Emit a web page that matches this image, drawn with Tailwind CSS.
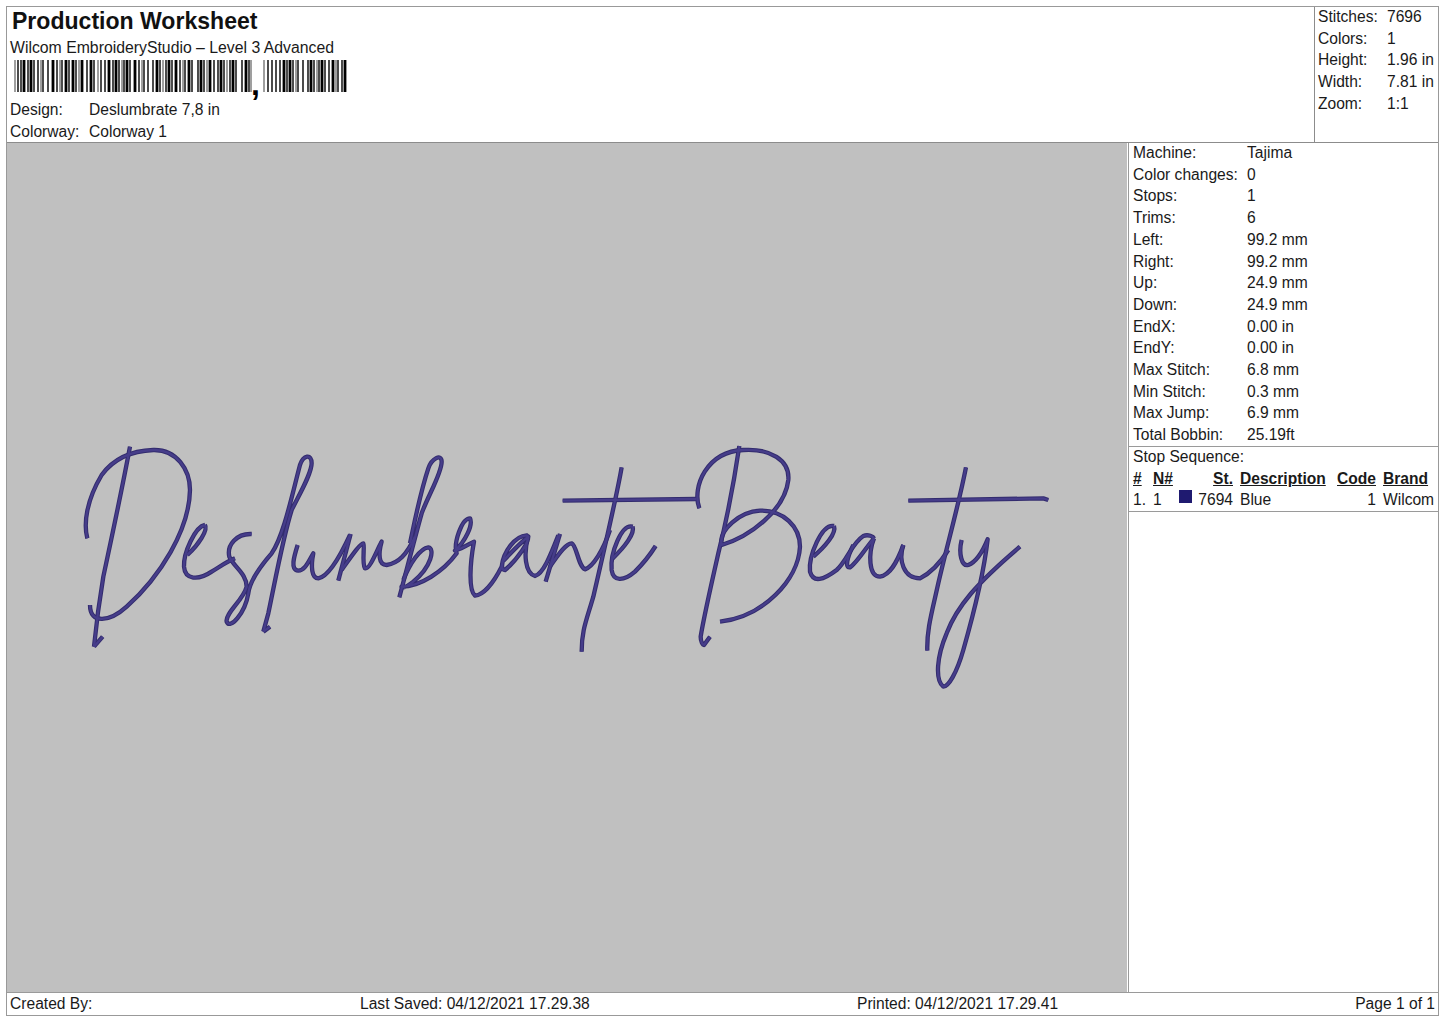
<!DOCTYPE html>
<html lang="en">
<head>
    <meta charset="UTF-8">
    <title>Production Worksheet</title>
    <script src="https://cdn.jsdelivr.net/npm/@tailwindcss/browser@4"></script>
</head>
<body class="bg-white text-[#1a1a1a] font-['Liberation_Sans',Arial,sans-serif] text-[15.6px] leading-[21.7px]">
<div class="ml-[6px] mt-[6px] w-[1433px] h-[1010px] border border-[#999] flex flex-col overflow-hidden">

    <!-- header -->
    <div class="h-[136px] flex border-b border-[#8c8c8c] shrink-0">
        <div class="flex-1 pl-[3px]">
            <div class="text-[23.05px] leading-[28px] font-bold text-[#111] pl-[2px]">Production Worksheet</div>
            <div class="text-[15.8px] leading-[21px] mt-[2px]">Wilcom EmbroideryStudio – Level 3 Advanced</div>
            <div class="h-[42px] relative -mt-[1px]">
                <svg width="345" height="40" viewBox="0 0 345 40" class="block">
                    <path stroke="#000" stroke-width="1.4" fill="none" d="M8 3v32M11 3v32M18 3v32M24 3v32M28 3v32M33 3v32M38 3v32M47 3v32M52 3v32M59 3v32M66 3v32M77 3v32M84 3v32M91 3v32M95 3v32M103 3v32M109 3v32M114 3v32M120 3v32M129 3v32M134 3v32M138 3v32M143 3v32M150 3v32M156 3v32M162 3v32M170 3v32M175 3v32M182 3v32M188 3v32M194 3v32M204 3v32M208 3v32M214 3v32M220 3v32M226 3v32M232 3v32M239 3v32M258 3v32M262 3v32M266 3v32M270 3v32M277 3v32M283 3v32M288 3v32M293 3v32M298 3v32M304 3v32M309 3v32M315 3v32M319 3v32M328 3v32M332 3v32"/>
                    <path stroke="#000" stroke-width="2.8" fill="none" d="M14 3v32M21 3v32M43 3v32M56 3v32M63 3v32M72 3v32M81 3v32M99 3v32M106 3v32M117 3v32M125 3v32M147 3v32M159 3v32M166 3v32M179 3v32M191 3v32M200 3v32M211 3v32M223 3v32M236 3v32M274 3v32M280 3v32M301 3v32M312 3v32M323 3v32M335 3v32"/>
                    <path stroke="#888" stroke-width="1.6" fill="none" d="M5 3v32M31 3v32M50 3v32M69 3v32M88 3v32M112 3v32M132 3v32M153 3v32M173 3v32M197 3v32M217 3v32M241 3v32M254 3v32M286 3v32M307 3v32M326 3v32"/>
                </svg>
                <span class="absolute left-[241px] top-[11px] font-bold text-[32px] leading-[32px] text-black">,</span>
            </div>
            <div class="flex h-[22px]"><span class="w-[79px]">Design:</span><span>Deslumbrate 7,8 in</span></div>
            <div class="flex h-[22px]"><span class="w-[79px]">Colorway:</span><span>Colorway 1</span></div>
        </div>
        <div class="w-[124px] border-l border-[#8c8c8c] pl-[3px] -mt-[1px]">
            <div class="flex"><span class="w-[69px]">Stitches:</span><span>7696</span></div>
            <div class="flex"><span class="w-[69px]">Colors:</span><span>1</span></div>
            <div class="flex"><span class="w-[69px]">Height:</span><span>1.96 in</span></div>
            <div class="flex"><span class="w-[69px]">Width:</span><span>7.81 in</span></div>
            <div class="flex"><span class="w-[69px]">Zoom:</span><span>1:1</span></div>
        </div>
    </div>

    <!-- main -->
    <div class="flex-1 flex min-h-0">
        <div class="w-[1120px] bg-[#c0c0c0] shrink-0">
            <svg width="1120" height="849" viewBox="7 143 1120 849" class="block" fill="none" stroke-linejoin="round">
                <defs>
                    <g id="part1" transform="translate(70 430) scale(.3333)">
                        <path d="M180 50C165 130 130 300 100 440C90 500 80 570 72 650"/>
                        <path d="M72 650L98 620"/>
                        <path d="M52 325C40 280 50 210 95 135C135 80 195 62 250 60C320 58 360 120 360 180C358 300 270 440 170 530C120 575 60 585 60 525"/>
                        <path d="M405 285C375 290 340 370 342 410C345 450 385 452 425 425C450 410 470 395 495 385"/>
                        <path d="M405 285C415 300 385 345 352 375"/>
                        <path d="M545 312C500 310 470 345 478 380C490 410 530 430 530 470C520 510 465 550 470 575C480 600 525 550 535 490C540 450 570 410 605 370C640 320 665 200 690 105C700 75 725 70 725 100C725 130 690 190 665 240C640 320 620 430 595 550L580 605"/>
                        <path d="M580 605L600 590"/>
                        <path d="M683 345C672 380 660 420 685 422C705 422 715 395 730 370C722 410 725 445 745 445C775 440 810 380 840 315"/>
                        <path d="M842 312L805 452"/>
                        <path d="M815 420C840 385 870 340 880 340C885 345 875 400 885 415C900 420 925 350 935 335C925 370 925 405 950 405C985 400 1010 375 1035 320"/>
                    </g>
                    <g id="part2" transform="translate(390 430) scale(.3333)">
                        <path d="M60 340C75 270 90 190 115 115C125 85 155 70 155 95C155 130 115 195 95 250C70 340 50 420 28 502"/>
                        <path d="M40 450C60 400 90 355 115 352C135 355 125 410 70 455C50 470 40 475 35 470C90 470 160 425 200 370C190 340 215 265 240 265C250 285 225 335 195 362C220 355 240 340 252 335C240 400 235 480 255 497C280 495 310 460 335 410C340 365 375 318 410 316C430 325 375 395 345 420C335 420 335 410 338 395C370 360 395 335 415 320C400 370 405 430 435 438C460 430 480 380 505 316"/>
                        <path d="M510 312L467 455"/>
                        <path d="M480 410C510 365 530 340 545 340C560 345 565 410 585 418C610 410 640 360 660 300"/>
                        <path d="M695 112C680 200 640 370 610 500C590 570 575 600 575 665"/>
                        <path d="M518 212L920 207"/>
                        <path d="M728 290C695 280 660 370 665 420C670 455 700 455 735 425C760 400 780 375 797 348"/>
                        <path d="M728 290C735 310 705 350 668 385"/>
                    </g>
                    <g id="part3" transform="translate(690 430) scale(.3333)">
                        <path d="M148 48C130 170 110 270 85 370C60 480 40 570 32 620C32 635 38 645 42 645L60 620"/>
                        <path d="M28 235C5 170 50 65 160 60C240 55 300 90 295 150C285 240 180 320 95 345C85 300 150 245 210 242C280 240 330 290 330 350C325 450 220 560 90 575"/>
                        <path d="M432 288C395 280 355 380 360 425C370 460 400 450 440 420C470 395 485 340 520 318C535 312 550 320 552 325"/>
                        <path d="M432 288C440 310 405 350 370 380"/>
                        <path d="M552 325C530 350 500 400 480 412C465 415 470 385 490 345"/>
                        <path d="M552 325C535 370 535 440 570 440C600 435 620 400 640 345"/>
                        <path d="M640 345C625 390 640 445 690 445C720 430 750 400 775 360"/>
                        <path d="M828 112C805 230 770 350 745 460C725 550 710 600 712 662"/>
                        <path d="M655 212L1060 205L1075 210"/>
                        <path d="M815 330C805 370 815 410 835 405C860 395 880 360 893 328C885 400 860 520 820 660C800 730 775 770 760 770C735 750 740 680 770 610C800 530 860 460 990 350"/>
                    </g>
                </defs>
                <g stroke="#332c6e" stroke-width="13">
                    <use href="#part1"/><use href="#part2"/><use href="#part3"/>
                </g>
                <g stroke="#463d8a" stroke-width="7">
                    <use href="#part1"/><use href="#part2"/><use href="#part3"/>
                </g>
            </svg>
        </div>
        <div class="flex-1 ml-[1px] border-l border-[#9a9a9a] flex flex-col min-w-0">
            <div class="h-[305px] border-b border-[#9a9a9a] pl-[4px] -mt-[1px] shrink-0">
                <div class="flex"><span class="w-[114px]">Machine:</span><span>Tajima</span></div>
                <div class="flex"><span class="w-[114px]">Color changes:</span><span>0</span></div>
                <div class="flex"><span class="w-[114px]">Stops:</span><span>1</span></div>
                <div class="flex"><span class="w-[114px]">Trims:</span><span>6</span></div>
                <div class="flex"><span class="w-[114px]">Left:</span><span>99.2 mm</span></div>
                <div class="flex"><span class="w-[114px]">Right:</span><span>99.2 mm</span></div>
                <div class="flex"><span class="w-[114px]">Up:</span><span>24.9 mm</span></div>
                <div class="flex"><span class="w-[114px]">Down:</span><span>24.9 mm</span></div>
                <div class="flex"><span class="w-[114px]">EndX:</span><span>0.00 in</span></div>
                <div class="flex"><span class="w-[114px]">EndY:</span><span>0.00 in</span></div>
                <div class="flex"><span class="w-[114px]">Max Stitch:</span><span>6.8 mm</span></div>
                <div class="flex"><span class="w-[114px]">Min Stitch:</span><span>0.3 mm</span></div>
                <div class="flex"><span class="w-[114px]">Max Jump:</span><span>6.9 mm</span></div>
                <div class="flex"><span class="w-[114px]">Total Bobbin:</span><span>25.19ft</span></div>
            </div>
            <div class="h-[65px] border-b border-[#9a9a9a] pl-[4px] shrink-0">
                <div class="-mt-[1px]">Stop Sequence:</div>
                <div class="grid grid-cols-[20px_26px_54px_100px_43px_1fr] font-bold underline">
                    <span>#</span><span>N#</span><span class="text-right">St.</span><span class="pl-[7px]">Description</span><span class="text-right">Code</span><span class="pl-[7px]">Brand</span>
                </div>
                <div class="grid grid-cols-[20px_26px_54px_100px_43px_1fr]">
                    <span>1.</span><span class="relative">1<i class="absolute left-[26px] top-[1px] w-[13px] h-[13px] bg-[#1f1a70]"></i></span><span class="text-right">7694</span><span class="pl-[7px]">Blue</span><span class="text-right">1</span><span class="pl-[7px]">Wilcom</span>
                </div>
            </div>
        </div>
    </div>

    <!-- footer -->
    <div class="h-[23px] border-t border-[#9a9a9a] flex shrink-0 pl-[3px] pr-[3px] leading-[21px]">
        <span class="w-[350px]">Created By:</span>
        <span class="w-[497px]">Last Saved: 04/12/2021 17.29.38</span>
        <span>Printed: 04/12/2021 17.29.41</span>
        <span class="ml-auto">Page 1 of 1</span>
    </div>
</div>
</body>
</html>
